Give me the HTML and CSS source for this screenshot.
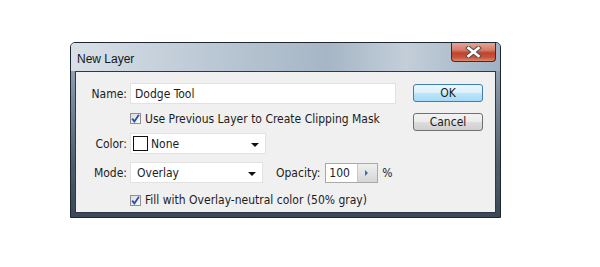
FILE: index.html
```html
<!DOCTYPE html>
<html>
<head>
	<meta charset="utf-8">
	<title>New Layer</title>
	<link rel="stylesheet" href="styles.css">
</head>
<body>
	<div class="window">
		<div class="titlebar">
			<span class="title">New Layer</span>
			<a class="close" href="javascript:;">
				<svg width="17" height="12" viewBox="0 0 17 12">
					<path d="M3.5 2 L13.5 10 M13.5 2 L3.5 10" stroke="#505050" stroke-width="4.6" stroke-linecap="square" />
					<path d="M3.5 2 L13.5 10 M13.5 2 L3.5 10" stroke="#ffffff" stroke-width="2.6" stroke-linecap="square" />
				</svg>
			</a>
		</div>
		<div class="client">
			<div class="form">
				<div class="row row-name">
					<label class="label">Name:</label>
					<div class="field name-field">Dodge Tool</div>
				</div>
				<div class="row row-check">
					<span class="label"></span>
					<span class="checkbox">
						<svg width="9" height="9" viewBox="0 0 9 9"><path d="M1.2 4.6 L3.4 7.4 L7.9 0.8" fill="none" stroke="#2a4fa8" stroke-width="1.8" /></svg>
					</span>
					<span class="check-text">Use Previous Layer to Create Clipping Mask</span>
				</div>
				<div class="row row-color">
					<label class="label">Color:</label>
					<div class="field select color-select">
						<span class="swatch"></span>
						<span class="select-text">None</span>
						<span class="arrow"></span>
					</div>
				</div>
				<div class="row row-mode">
					<label class="label">Mode:</label>
					<div class="field select mode-select">
						<span class="select-text">Overlay</span>
						<span class="arrow"></span>
					</div>
					<label class="opacity-label">Opacity:</label>
					<div class="spin">
						<span class="spin-value">100</span>
						<span class="spin-btn"></span>
					</div>
					<span class="unit">%</span>
				</div>
				<div class="row row-fill">
					<span class="label"></span>
					<span class="checkbox">
						<svg width="9" height="9" viewBox="0 0 9 9"><path d="M1.2 4.6 L3.4 7.4 L7.9 0.8" fill="none" stroke="#2a4fa8" stroke-width="1.8" /></svg>
					</span>
					<span class="check-text">Fill with Overlay-neutral color (50% gray)</span>
				</div>
			</div>
			<div class="buttons">
				<a class="btn btn-ok" href="javascript:;">OK</a>
				<a class="btn btn-cancel" href="javascript:;">Cancel</a>
			</div>
		</div>
	</div>
</body>
</html>
```

FILE: styles.css
```css
* {
	padding: 0px;
	margin: 0px;
	box-sizing: border-box;
}
body {
	background: #ffffff;
	font-family: "DejaVu Sans Condensed", "Liberation Sans", Arial, sans-serif;
	font-size: 12px;
	color: #1c1c1c;
}
.window {
	width: 431px;
	height: 176px;
	margin: 42px 0 0 70px;
	border: 1px solid #1d2731;
	border-radius: 5px 5px 0 0;
	padding: 0 4px 4px;
	background: linear-gradient(to bottom, #aab8c6 0px, #8796a6 40px, #4f5e6d 120px, #3b4856 100%);
}
.titlebar {
	height: 28px;
	display: flex;
	justify-content: space-between;
	align-items: flex-start;
	margin: 0 -4px;
	padding: 0 4px 0 6px;
	border-radius: 4px 4px 0 0;
	background: linear-gradient(to right, #d9e0e7 0%, #b9c6d3 35%, #a6b6c6 60%, #c3ced9 78%, #9fb1c3 100%);
}
.title {
	font-family: "Liberation Sans", Arial, sans-serif;
	font-size: 12px;
	line-height: 12px;
	margin-top: 10px;
	color: #101820;
}
.close {
	width: 45px;
	height: 19px;
	display: flex;
	justify-content: center;
	align-items: center;
	border: 1px solid #5a2218;
	border-top: none;
	border-radius: 0 0 4px 4px;
	background: linear-gradient(to bottom, #e6a597 0%, #d57a66 40%, #c0422d 55%, #c8553d 80%, #dd8c70 100%);
}
.client {
	height: 142px;
	border: 1px solid #2c3844;
	background: #f0f0f0;
	display: flex;
}
.form {
	width: 320px;
	display: flex;
	flex-direction: column;
	padding-top: 11px;
}
.row {
	display: flex;
	align-items: center;
}
.row-name {
	height: 21px;
}
.row-check {
	height: 29px;
}
.row-color {
	height: 21px;
}
.row-mode {
	height: 21px;
	margin-top: 8px;
}
.row-fill {
	height: 24px;
	margin-top: 5px;
}
.label {
	width: 51px;
	margin-right: 3px;
	text-align: right;
	flex-shrink: 0;
}
.field {
	height: 21px;
	background: #ffffff;
	border: 1px solid #e2e2e2;
	display: flex;
	align-items: center;
}
.name-field {
	width: 266px;
	padding-left: 4px;
}
.checkbox {
	width: 11px;
	height: 11px;
	border: 1px solid #8e8f8f;
	background: linear-gradient(135deg, #dcdcdc, #fbfbfb);
	display: flex;
	justify-content: center;
	align-items: center;
	flex-shrink: 0;
}
.check-text {
	margin-left: 4px;
	white-space: nowrap;
}
.select {
	position: relative;
}
.color-select {
	width: 136px;
	padding-left: 2px;
}
.mode-select {
	width: 133px;
	padding-left: 6px;
}
.swatch {
	width: 15px;
	height: 15px;
	border: 1px solid #111111;
	background: #ffffff;
	margin-right: 3px;
}
.arrow {
	position: absolute;
	right: 6px;
	top: 9px;
	width: 0;
	height: 0;
	border-left: 4px solid transparent;
	border-right: 4px solid transparent;
	border-top: 4px solid #111111;
}
.opacity-label {
	margin-left: 13px;
	margin-right: 5px;
}
.spin {
	width: 53px;
	height: 20px;
	border: 1px solid #a9a9a9;
	background: #ffffff;
	display: flex;
}
.spin-value {
	width: 32px;
	padding-left: 3px;
	line-height: 18px;
	border-right: 1px solid #c8c8c8;
}
.spin-btn {
	flex: 1;
	position: relative;
	background: linear-gradient(to bottom, #efefef, #d6d6d6);
}
.spin-btn::after {
	content: "";
	position: absolute;
	left: 7px;
	top: 6px;
	border-top: 3px solid transparent;
	border-bottom: 3px solid transparent;
	border-left: 3px solid #3f6aa8;
}
.unit {
	margin-left: 4px;
}
.buttons {
	margin-left: 17px;
	padding-top: 12px;
	display: flex;
	flex-direction: column;
}
.btn {
	width: 70px;
	display: block;
	text-align: center;
	text-decoration: none;
	color: #1c1c1c;
	border-radius: 3px;
}
.btn-ok {
	height: 18px;
	line-height: 16px;
	border: 1px solid #3c7fb1;
	background: linear-gradient(to bottom, #eaf6fd 0%, #d9f0fc 50%, #bee6fd 51%, #a7d9f5 100%);
}
.btn-cancel {
	height: 18px;
	line-height: 16px;
	margin-top: 11px;
	border: 1px solid #707070;
	background: linear-gradient(to bottom, #f2f2f2 0%, #ebebeb 50%, #dddddd 51%, #cfcfcf 100%);
}
```
